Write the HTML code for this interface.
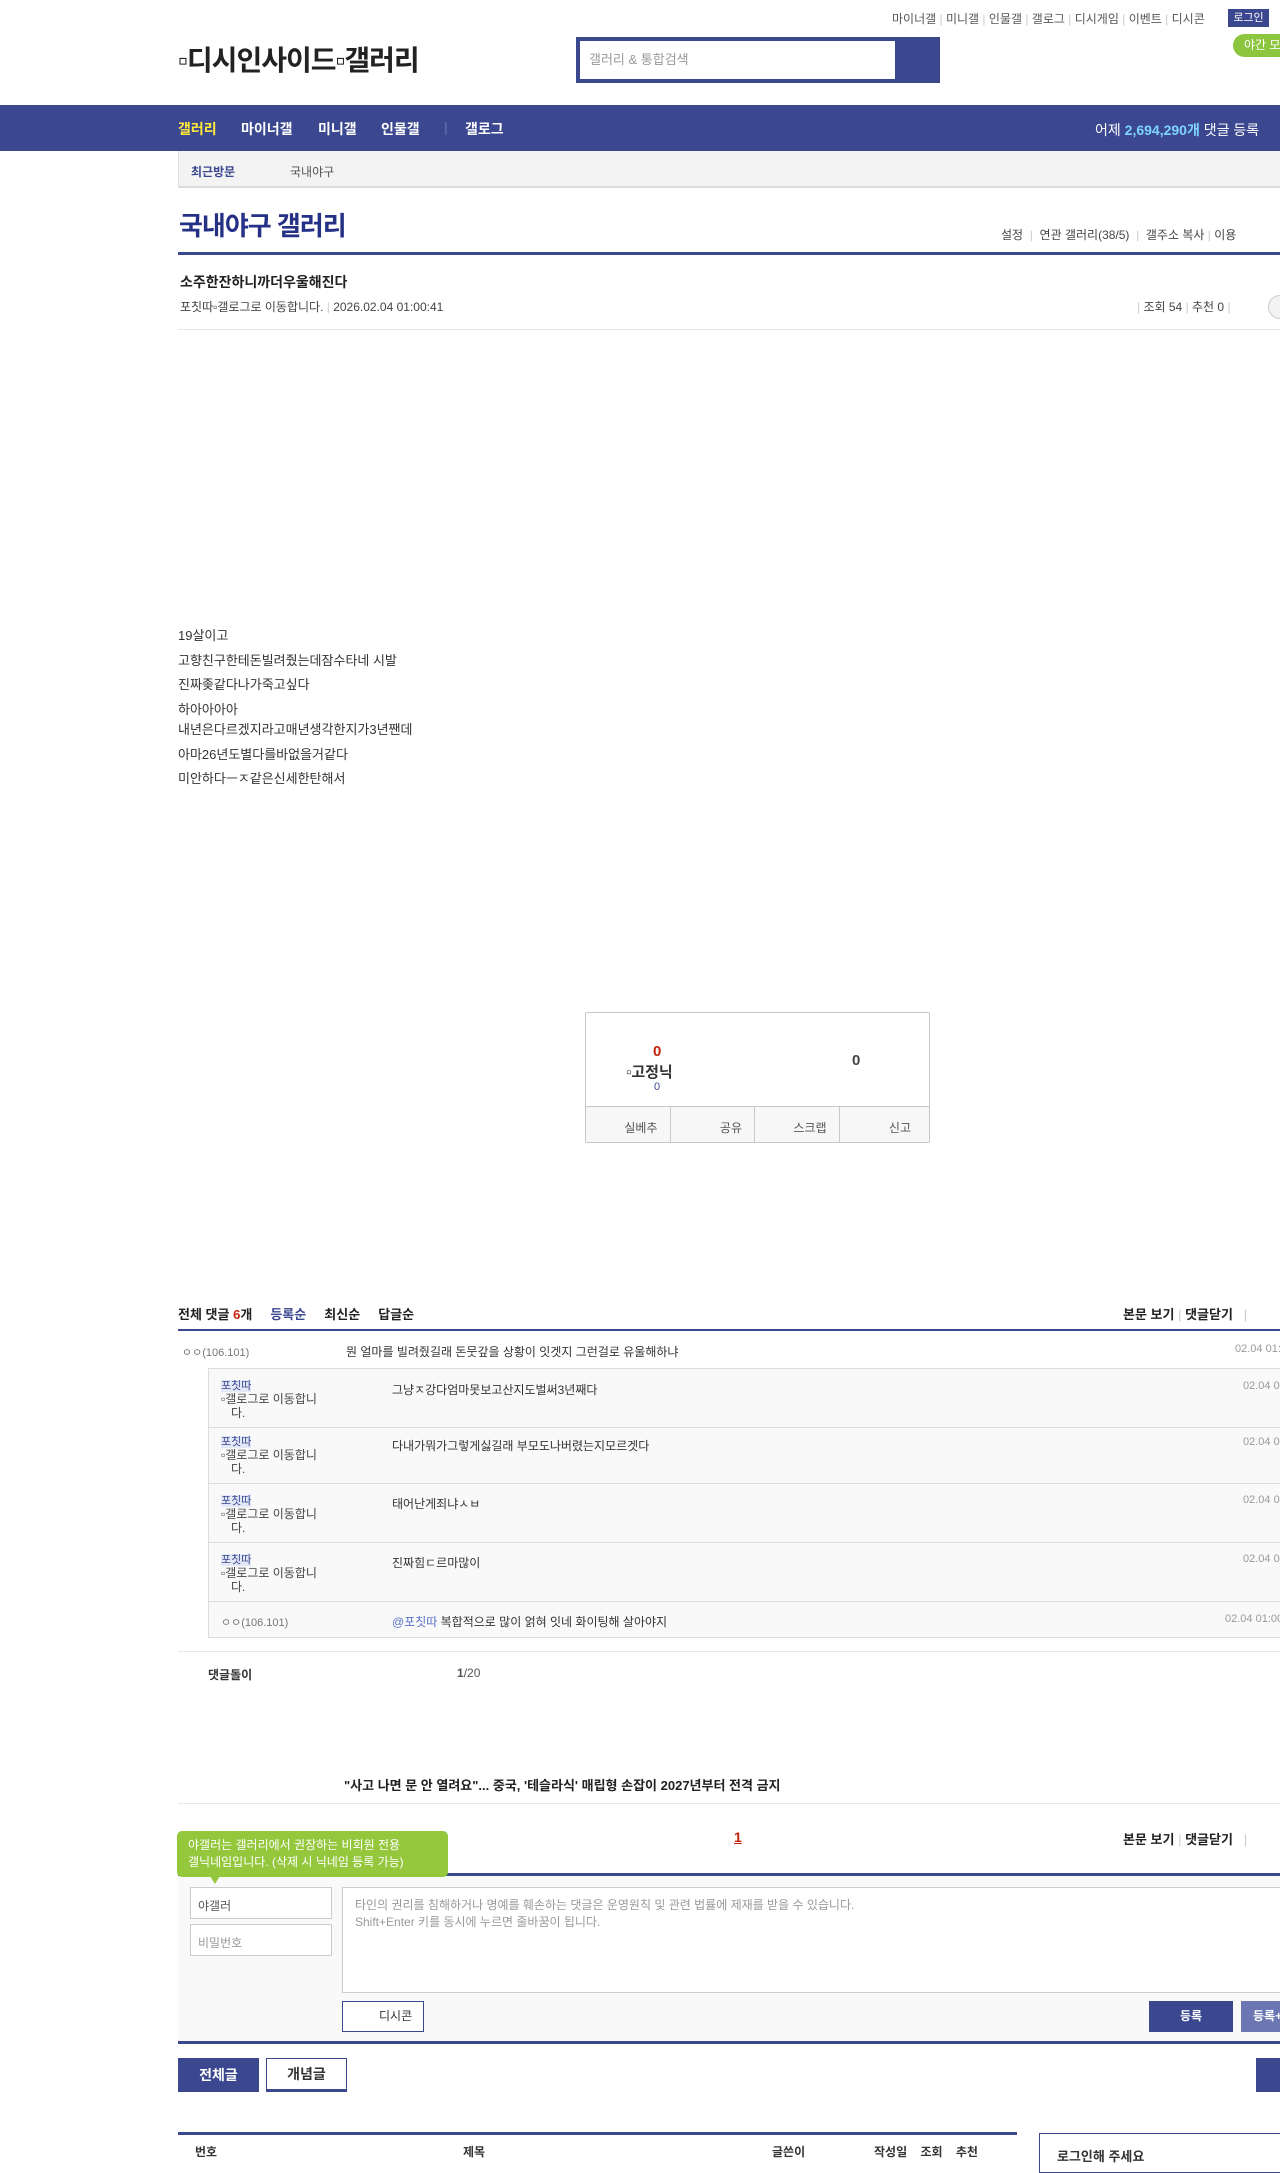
<!DOCTYPE html>
<html><head><meta charset="utf-8"><style>
*{margin:0;padding:0;box-sizing:border-box}
html,body{width:1280px;height:2153px;overflow:hidden;background:#fff;font-family:"Liberation Sans","Noto Sans CJK KR",sans-serif;color:#333;font-size:12px}
.a{position:absolute;white-space:nowrap}
.navy{background:#3b4890}
.b{font-weight:bold}
.nv{position:absolute;top:119px;font-size:14px;font-weight:bold;color:#fff;white-space:nowrap}
</style></head><body>
<!-- top links -->
<div class="a" style="left:892px;top:10px;font-size:12px;color:#555">마이너갤 <span style="color:#ccc">|</span> 미니갤 <span style="color:#ccc">|</span> 인물갤 <span style="color:#ccc">|</span> 갤로그 <span style="color:#ccc">|</span> 디시게임 <span style="color:#ccc">|</span> 이벤트 <span style="color:#ccc">|</span> 디시콘</div>
<div class="a navy" style="left:1228px;top:9px;width:41px;height:18px;color:#fff;font-size:11px;line-height:18px;text-align:center">로그인</div>
<div class="a" style="left:1233px;top:34px;width:60px;height:23px;border-radius:12px;background:#8cc63f;color:#fff;font-size:12px;line-height:23px;padding-left:11px">야간 모드</div>
<div class="a" style="left:178px;top:39px;font-size:28px;color:#222;font-weight:bold;letter-spacing:-1px">▫디시인사이드▫갤러리</div>
<div class="a navy" style="left:576px;top:37px;width:364px;height:46px"></div>
<div class="a" style="left:580px;top:41px;width:315px;height:38px;background:#fff;color:#999;font-size:13px;line-height:38px;padding-left:9px">갤러리 &amp; 통합검색</div>
<!-- nav -->
<div class="a navy" style="left:0;top:105px;width:1280px;height:46px"></div>
<div class="nv" style="left:178px;color:#ffea3a">갤러리</div>
<div class="nv" style="left:241px">마이너갤</div>
<div class="nv" style="left:318px">미니갤</div>
<div class="nv" style="left:381px">인물갤</div>
<div class="nv" style="left:444px;color:#6a76b0;font-weight:normal">|</div>
<div class="nv" style="left:465px">갤로그</div>
<div class="a" style="left:1095px;top:120px;font-size:14px;color:#fff">어제 <b style="color:#7fd4ff">2,694,290개</b> 댓글 등록</div>
<div class="a" style="left:178px;top:151px;width:1102px;height:37px;background:#f3f3f3;border-left:1px solid #ddd;border-bottom:2px solid #ddd"></div>
<div class="a b" style="left:191px;top:163px;font-size:12px;color:#3b4890">최근방문</div>
<div class="a" style="left:290px;top:163px;font-size:12px;color:#555">국내야구</div>
<div class="a b" style="left:179px;top:206px;font-size:26px;color:#253185;letter-spacing:-1px">국내야구 갤러리</div>
<div class="a" style="left:1001px;top:226px;font-size:12px;color:#444">설정 &nbsp;<span style="color:#ccc">|</span>&nbsp; 연관 갤러리(38/5) &nbsp;<span style="color:#ccc">|</span>&nbsp; 갤주소 복사 <span style="color:#ccc">|</span> 이용</div>
<div class="a navy" style="left:178px;top:252px;width:1102px;height:3px"></div>
<div class="a b" style="left:180px;top:272px;font-size:14px;color:#222">소주한잔하니까더우울해진다</div>
<div class="a" style="left:180px;top:298px;font-size:12px;color:#444">포칫따▫갤로그로 이동합니다. <span style="color:#ccc">|</span> 2026.02.04 01:00:41</div>
<div class="a" style="left:1137px;top:298px;font-size:12px;color:#444"><span style="color:#ccc">|</span> 조회 54 <span style="color:#ccc">|</span> 추천 0 <span style="color:#ccc">|</span></div>
<div class="a" style="left:1268px;top:295px;width:24px;height:24px;border-radius:12px;border:1px solid #ccc;background:#f3f3f3"></div>
<div class="a" style="left:178px;top:329px;width:1102px;height:1px;background:#e5e5e5"></div>
<!-- body -->
<div class="a" style="left:178px;top:624px;font-size:13px;color:#333;line-height:24.5px">19살이고<br>고향친구한테돈빌려줬는데잠수타네 시발<br>진짜좆같다나가죽고싶다<br>하아아아아</div>
<div class="a" style="left:178px;top:718px;font-size:13px;color:#333;line-height:24.5px">내년은다르겠지라고매년생각한지가3년짼데<br>아마26년도별다를바없을거같다<br>미안하다ㅡㅈ같은신세한탄해서</div>
<!-- recommend -->
<div class="a" style="left:585px;top:1012px;width:345px;height:131px;border:1px solid #c8c8c8;border-radius:2px"></div>
<div class="a b" style="left:653px;top:1043px;font-size:15px;color:#c3230d">0</div>
<div class="a b" style="left:626px;top:1061px;font-size:15px;color:#333">▫고정닉</div>
<div class="a" style="left:654px;top:1081px;font-size:11px;color:#3b4890">0</div>
<div class="a b" style="left:852px;top:1052px;font-size:15px;color:#444">0</div>
<div class="a" style="left:586px;top:1106px;width:343px;height:36px;background:#f7f7f7;border-top:1px solid #c8c8c8;display:flex">
<div style="flex:1;border-right:1px solid #c8c8c8;text-align:right;padding:12px 12px 0 0;color:#555">실베추</div>
<div style="flex:1;border-right:1px solid #c8c8c8;text-align:right;padding:12px 12px 0 0;color:#555">공유</div>
<div style="flex:1;border-right:1px solid #c8c8c8;text-align:right;padding:12px 12px 0 0;color:#555">스크랩</div>
<div style="flex:1;text-align:right;padding:12px 18px 0 0;color:#555">신고</div></div>
<!-- comments -->
<div class="a b" style="left:178px;top:1304px;font-size:13px;color:#222">전체 댓글 <span style="color:#c3230d">6</span>개 &nbsp;&nbsp;&nbsp; <span style="color:#3b4890">등록순</span> &nbsp;&nbsp;&nbsp; 최신순 &nbsp;&nbsp;&nbsp; 답글순</div>
<div class="a b" style="left:1123px;top:1304px;font-size:13px;color:#222">본문 보기 <span style="color:#ccc;font-weight:normal">|</span> 댓글닫기 &nbsp;&nbsp;<span style="color:#ccc;font-weight:normal">|</span></div>
<div class="a navy" style="left:178px;top:1329px;width:1102px;height:2px"></div>
<div class="a" style="left:182px;top:1344px;font-size:11px;color:#777">ㅇㅇ(106.101)</div>
<div class="a" style="left:346px;top:1343px;font-size:12px;color:#333">뭔 얼마를 빌려줬길래 돈뭇갚을 상황이 잇겟지 그런걸로 유울해하냐</div>
<div class="a" style="left:1235px;top:1343px;font-size:11px;color:#999">02.04 01:00:00</div>
<div class="a" style="left:208px;top:1368px;width:1072px;height:270px;background:#f9f9f9;border:1px solid #ddd;border-right:none"></div>
<div class="a" style="left:209px;top:1427px;width:1071px;height:1px;background:#ddd"></div>
<div class="a" style="left:209px;top:1483px;width:1071px;height:1px;background:#ddd"></div>
<div class="a" style="left:209px;top:1542px;width:1071px;height:1px;background:#ddd"></div>
<div class="a" style="left:209px;top:1601px;width:1071px;height:1px;background:#ddd"></div>
<div class="a" style="left:221px;top:1380px;font-size:11px;color:#3b4890;line-height:13px"><span style="background:#e3e8f7">포칫따</span><br><span style="color:#444;font-size:12px">▫갤로그로 이동합니<br>&nbsp;&nbsp;&nbsp;다.</span></div>
<div class="a" style="left:221px;top:1436px;font-size:11px;color:#3b4890;line-height:13px"><span style="background:#e3e8f7">포칫따</span><br><span style="color:#444;font-size:12px">▫갤로그로 이동합니<br>&nbsp;&nbsp;&nbsp;다.</span></div>
<div class="a" style="left:221px;top:1495px;font-size:11px;color:#3b4890;line-height:13px"><span style="background:#e3e8f7">포칫따</span><br><span style="color:#444;font-size:12px">▫갤로그로 이동합니<br>&nbsp;&nbsp;&nbsp;다.</span></div>
<div class="a" style="left:221px;top:1554px;font-size:11px;color:#3b4890;line-height:13px"><span style="background:#e3e8f7">포칫따</span><br><span style="color:#444;font-size:12px">▫갤로그로 이동합니<br>&nbsp;&nbsp;&nbsp;다.</span></div>
<div class="a" style="left:392px;top:1381px;font-size:12px">그냥ㅈ강다엄마못보고산지도벌써3년째다</div>
<div class="a" style="left:392px;top:1437px;font-size:12px">다내가뭐가그렇게싫길래 부모도나버렸는지모르겟다</div>
<div class="a" style="left:392px;top:1495px;font-size:12px">태어난게죄냐ㅅㅂ</div>
<div class="a" style="left:392px;top:1554px;font-size:12px">진짜힘ㄷ르마많이</div>
<div class="a" style="left:1243px;top:1380px;font-size:11px;color:#999">02.04 01:00</div>
<div class="a" style="left:1243px;top:1436px;font-size:11px;color:#999">02.04 01:00</div>
<div class="a" style="left:1243px;top:1494px;font-size:11px;color:#999">02.04 01:00</div>
<div class="a" style="left:1243px;top:1553px;font-size:11px;color:#999">02.04 01:00</div>
<div class="a" style="left:221px;top:1614px;font-size:11px;color:#777">ㅇㅇ(106.101)</div>
<div class="a" style="left:392px;top:1613px;font-size:12px"><span style="color:#5a73c8">@포칫따</span> 복합적으로 많이 얽혀 잇네 화이팅해 살아야지</div>
<div class="a" style="left:1225px;top:1613px;font-size:11px;color:#999">02.04 01:00</div>
<div class="a" style="left:178px;top:1651px;width:1102px;height:1px;background:#e8e8e8"></div>
<div class="a b" style="left:208px;top:1666px;font-size:12px;color:#333">댓글돌이</div>
<div class="a" style="left:457px;top:1666px;font-size:12px;color:#555"><b>1</b>/20</div>
<div class="a b" style="left:344px;top:1775px;font-size:13px;color:#222">"사고 나면 문 안 열려요"... 중국, '테슬라식' 매립형 손잡이 2027년부터 전격 금지</div>
<div class="a" style="left:178px;top:1803px;width:1102px;height:1px;background:#e8e8e8"></div>
<div class="a" style="left:734px;top:1829px;font-size:14px;color:#c3230d;text-decoration:underline;font-weight:bold">1</div>
<div class="a b" style="left:1123px;top:1829px;font-size:13px;color:#222">본문 보기 <span style="color:#ccc;font-weight:normal">|</span> 댓글닫기 &nbsp;&nbsp;<span style="color:#ccc;font-weight:normal">|</span></div>
<!-- form -->
<div class="a" style="left:178px;top:1873px;width:1102px;height:171px;background:#f9f9f9;border-top:3px solid #3b4890;border-bottom:3px solid #3b4890"></div>
<div class="a" style="left:177px;top:1831px;width:271px;height:46px;background:#95c73d;border-radius:5px;color:#fff;font-size:12px;line-height:17px;padding:6px 11px">야갤러는 갤러리에서 권장하는 비회원 전용<br>갤닉네임입니다. (삭제 시 닉네임 등록 가능)</div>
<div class="a" style="left:210px;top:1876px;width:0;height:0;border-left:5px solid transparent;border-right:5px solid transparent;border-top:8px solid #95c73d"></div>
<div class="a" style="left:190px;top:1887px;width:142px;height:32px;background:#fff;border:1px solid #ccc;font-size:12px;color:#555;padding:9px 7px">야갤러</div>
<div class="a" style="left:190px;top:1924px;width:142px;height:32px;background:#fff;border:1px solid #ccc;font-size:12px;color:#999;padding:9px 7px">비밀번호</div>
<div class="a" style="left:342px;top:1887px;width:950px;height:106px;background:#fff;border:1px solid #ccc;font-size:12px;color:#999;padding:9px 12px;line-height:17px;white-space:normal">타인의 권리를 침해하거나 명예를 훼손하는 댓글은 운영원칙 및 관련 법률에 제재를 받을 수 있습니다.<br>Shift+Enter 키를 동시에 누르면 줄바꿈이 됩니다.</div>
<div class="a" style="left:342px;top:2001px;width:82px;height:31px;background:#fff;border:1px solid #3b4890;font-size:12px;color:#333;line-height:29px;padding-left:36px">디시콘</div>
<div class="a navy b" style="left:1149px;top:2001px;width:84px;height:31px;color:#fff;font-size:12px;line-height:31px;text-align:center">등록</div>
<div class="a b" style="left:1241px;top:2001px;width:60px;height:31px;background:#6b76b3;color:#fff;font-size:12px;line-height:31px;padding-left:12px">등록+추천</div>
<div class="a navy b" style="left:178px;top:2058px;width:81px;height:34px;color:#fff;font-size:14px;line-height:34px;text-align:center">전체글</div>
<div class="a b" style="left:266px;top:2058px;width:81px;height:34px;background:#fff;border:1px solid #3b4890;border-bottom:3px solid #3b4890;color:#333;font-size:14px;line-height:30px;text-align:center">개념글</div>
<div class="a navy" style="left:1256px;top:2058px;width:40px;height:34px"></div>
<div class="a navy" style="left:178px;top:2132px;width:839px;height:3px"></div>
<div class="a b" style="left:195px;top:2143px;font-size:12px;color:#333">번호</div>
<div class="a b" style="left:463px;top:2143px;font-size:12px;color:#333">제목</div>
<div class="a b" style="left:772px;top:2143px;font-size:12px;color:#333">글쓴이</div>
<div class="a b" style="left:874px;top:2143px;font-size:12px;color:#333">작성일 &nbsp;&nbsp; 조회 &nbsp;&nbsp; 추천</div>
<div class="a" style="left:1039px;top:2133px;width:250px;height:40px;border:1px solid #3b4890;border-right:none"></div>
<div class="a b" style="left:1057px;top:2146px;font-size:13px;color:#333">로그인해 주세요</div>
</body></html>
